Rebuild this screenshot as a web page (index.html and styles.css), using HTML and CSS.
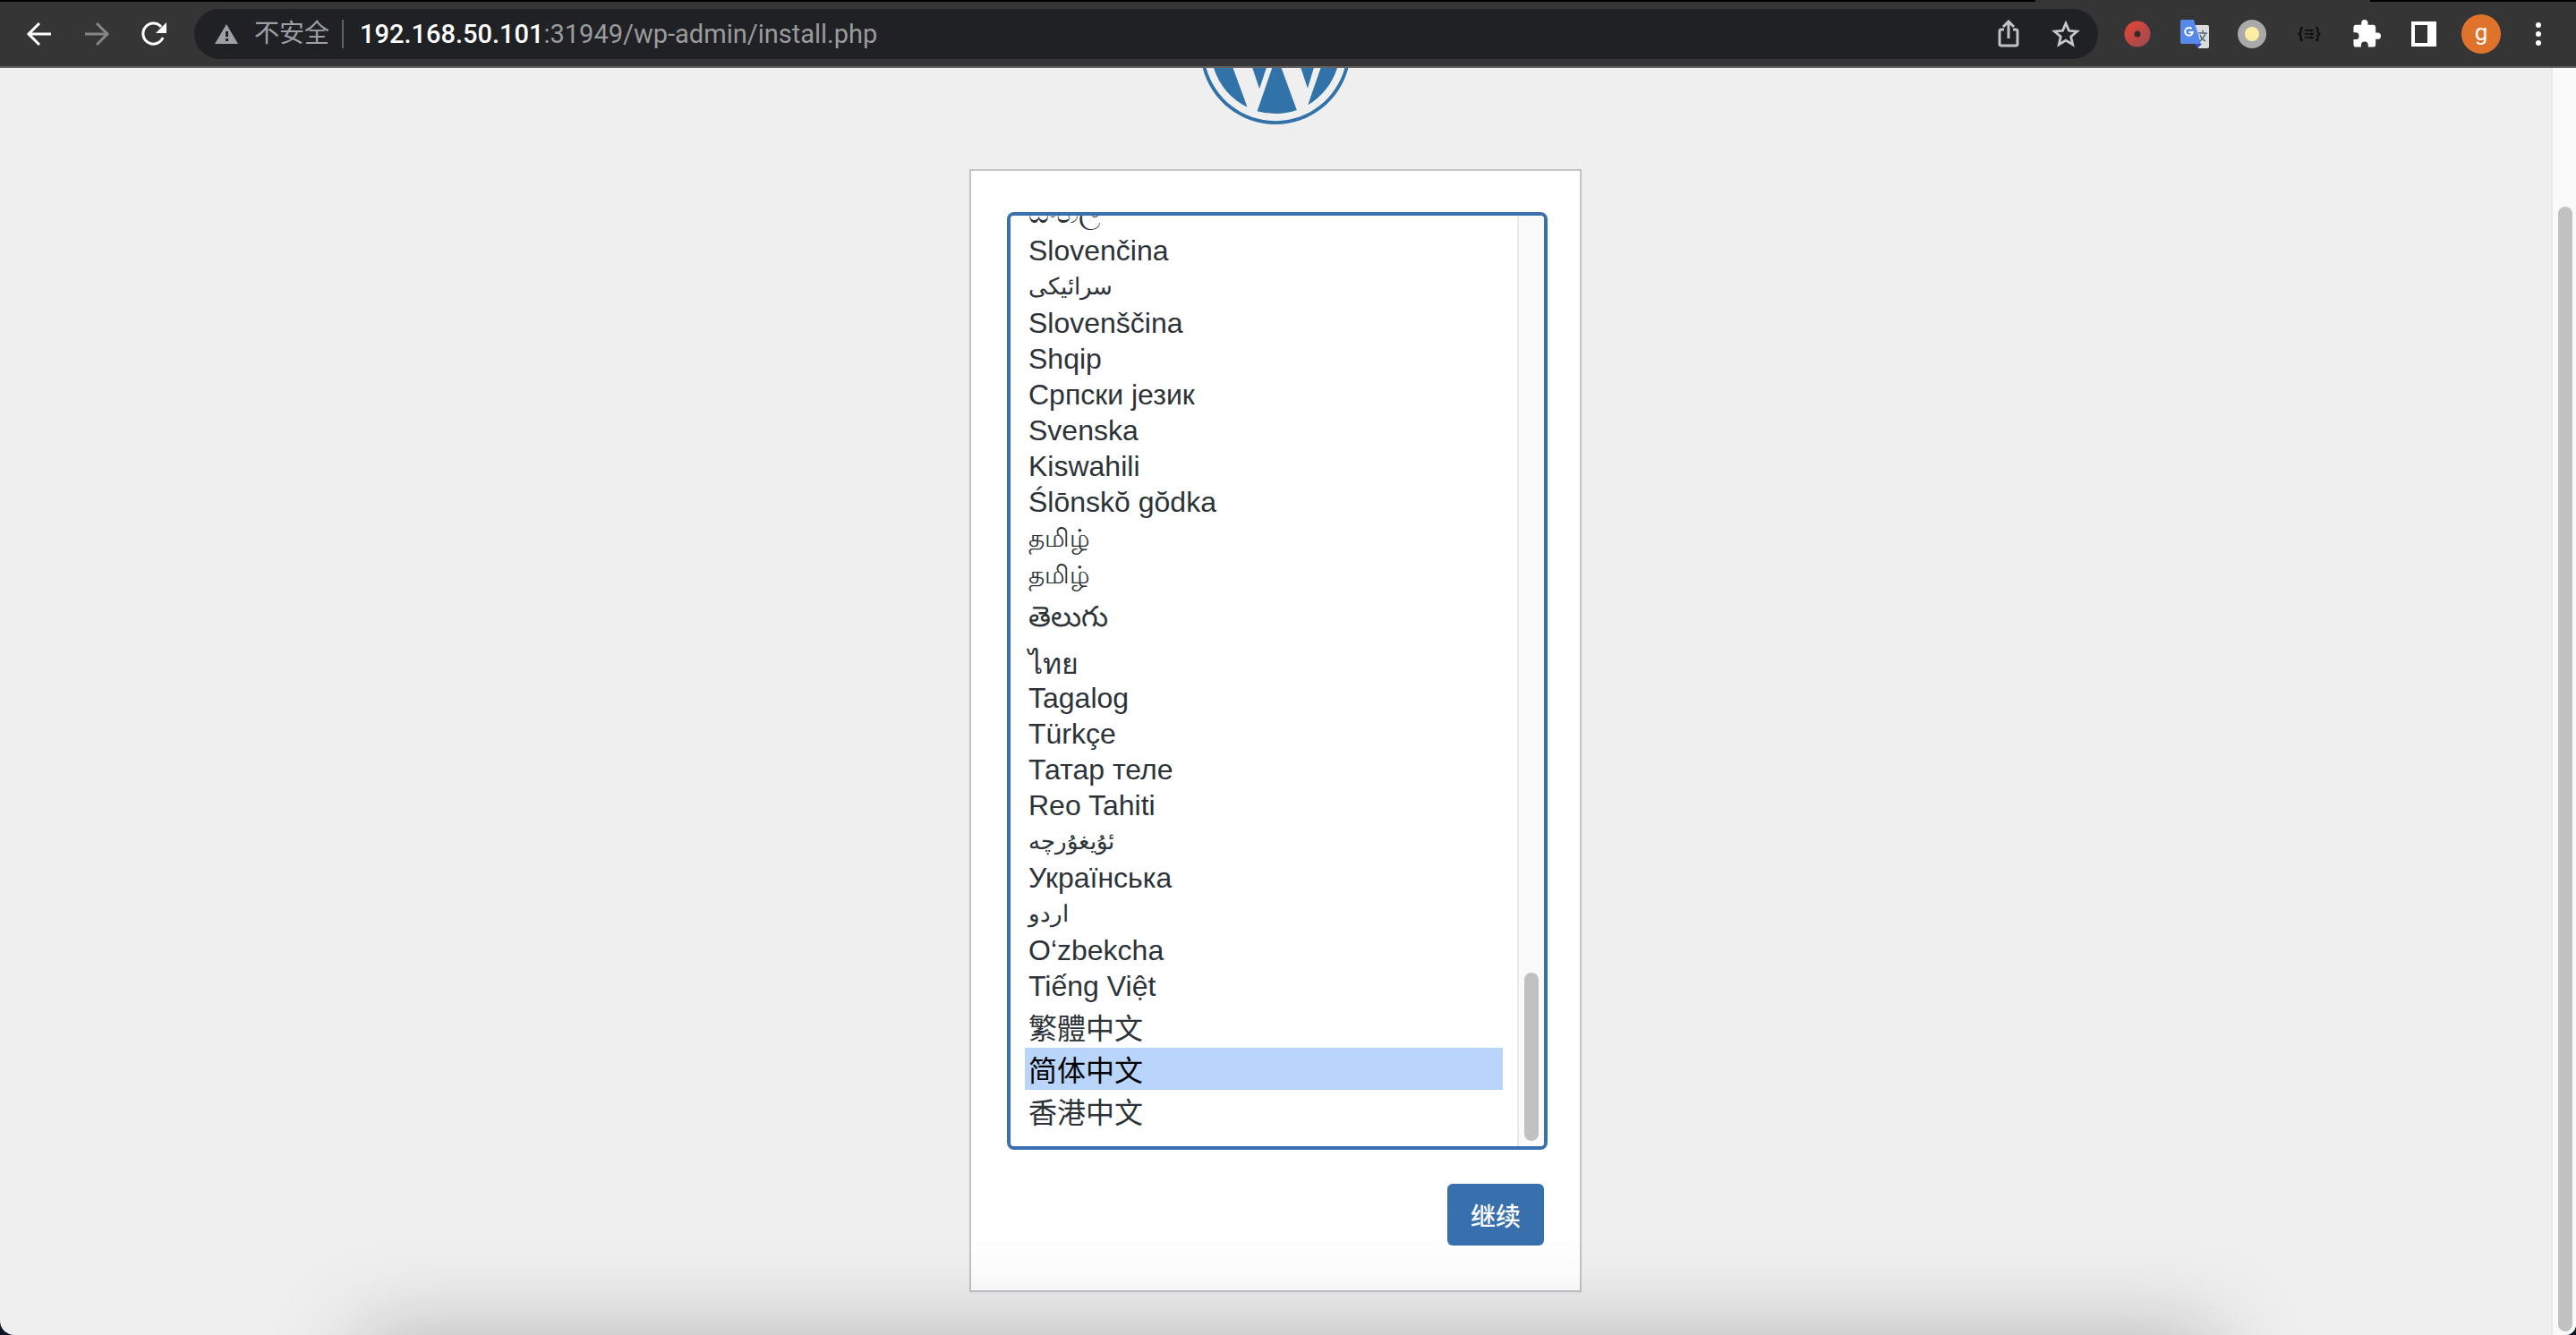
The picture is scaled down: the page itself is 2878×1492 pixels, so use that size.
FILE: index.html
```html
<!DOCTYPE html>
<html lang="zh-CN">
<head>
<meta charset="utf-8">
<title>WordPress › 安装</title>
<link rel="stylesheet" href="styles.css">
</head>
<body>
<div class="window">
  <header class="toolbar">
    <nav class="nav-buttons">
      <button class="tool" type="button" aria-label="后退"><svg width="30" height="30" viewBox="0 0 30 30"><path d="M28 15H4M15 3L3 15l12 12" fill="none" stroke="#fff" stroke-width="3"/></svg></button>
      <button class="tool" type="button" aria-label="前进"><svg width="30" height="30" viewBox="0 0 30 30"><path d="M2 15h24M15 3l12 12-12 12" fill="none" stroke="#858585" stroke-width="3"/></svg></button>
      <button class="tool" type="button" aria-label="重新加载"><svg width="30" height="30" viewBox="0 0 30 30"><path d="M25 19a11.500 11.500 0 1 1-2-12" fill="none" stroke="#fff" stroke-width="3"/><path d="M29 2v12H17z" fill="#fff"/></svg></button>
    </nav>
    <div class="omnibox">
      <svg width="26" height="24" viewBox="0 0 26 24"><path d="M13 1l13 22H0z" fill="#9aa0a6"/><path d="M12 9h3v6h-3zM12 17h3v3h-3z" fill="#202124"/></svg>
      <span class="security">不安全</span>
      <span class="divider"></span>
      <span class="url"><b>192.168.50.101</b>:31949/wp-admin/install.php</span>
      <button class="tool" type="button" aria-label="分享"><svg width="24" height="32" viewBox="0 0 24 32"><path d="M7 11H4a2 2 0 0 0-2 2v14a2 2 0 0 0 2 2h16a2 2 0 0 0 2-2V13a2 2 0 0 0-2-2h-3M12 21V3M6 8l6-6 6 6" fill="none" stroke="#c0c1c3" stroke-width="3"/></svg></button>
      <button class="tool" type="button" aria-label="收藏"><svg width="32" height="32" viewBox="0 0 32 32"><path d="M16 4l3.500 8.300 9 .8-6.800 5.900 2 8.800L16 23.100l-7.700 4.700 2-8.800-6.800-5.900 9-.8z" fill="none" stroke="#c6c7c9" stroke-width="2.800"/></svg></button>
    </div>
    <div class="extensions">
      <button class="tool" type="button" aria-label="录制"><svg width="30" height="30" viewBox="0 0 30 30"><defs><linearGradient id="rec" x1="0" y1="0" x2="1" y2="1"><stop offset="0.200" stop-color="#d9453a"/><stop offset="1" stop-color="#984a52"/></linearGradient></defs><circle cx="15" cy="15" r="14.500" fill="url(#rec)"/><circle cx="15" cy="15" r="3.500" fill="#35272a"/></svg></button>
      <button class="tool" type="button" aria-label="翻译"><svg width="32" height="32" viewBox="0 0 32 32"><path d="M14 6h16a2 2 0 0 1 2 2v22a2 2 0 0 1-2 2H20z" fill="#dcdcdc"/><path d="M16 27h8l-5 5z" fill="#3450b4"/><path d="M2 0h13l8 27H2a2 2 0 0 1-2-2V2a2 2 0 0 1 2-2z" fill="#5689ea"/><path d="M20 15h10M25 12v3M28 15c-1 4-4 7-6 9M22 17c1 3 4 6 6 7" fill="none" stroke="#56707c" stroke-width="1.600"/><path d="M12.500 10.200a4.300 4.300 0 1 0 1.300 3.800H9.500" fill="none" stroke="#fff" stroke-width="2"/></svg></button>
      <button class="tool" type="button" aria-label="主题"><svg width="32" height="32" viewBox="0 0 32 32"><circle cx="16" cy="16" r="16" fill="#a9a9a9"/><circle cx="16" cy="16" r="8" fill="#fdeea3"/></svg></button>
      <button class="tool" type="button" aria-label="JSON"><svg width="28" height="18" viewBox="0 0 28 18"><path d="M7 2H6Q4.500 2 4.500 4v3L2.500 9l2 2v3q0 2 1.500 2h1M21 2h1q1.500 0 1.500 2v3l2 2-2 2v3q0 2-1.500 2h-1" fill="none" stroke="#0c0c0c" stroke-width="2"/><path d="M9 5h10M9 9h10M9 13h10M16 3.500v3M17 7.500v3M16 11.500v3" fill="none" stroke="#0c0c0c" stroke-width="1.400"/></svg></button>
      <button class="tool" type="button" aria-label="扩展程序"><svg width="32" height="32" viewBox="1 1 22 22"><path d="M20.500 11H19V7a2 2 0 0 0-2-2h-4V3.500a2.500 2.500 0 0 0-5 0V5H4a2 2 0 0 0-2 2v3.800h1.500a2.700 2.700 0 0 1 0 5.400H2V20a2 2 0 0 0 2 2h3.800v-1.500a2.700 2.700 0 0 1 5.400 0V22H17a2 2 0 0 0 2-2v-4h1.500a2.500 2.500 0 0 0 0-5z" fill="#fff"/></svg></button>
      <button class="tool" type="button" aria-label="侧边栏"><svg width="28" height="28" viewBox="0 0 28 28"><path d="M0 0h28v28H0zM4 4v20h14V4z" fill="#fff" fill-rule="evenodd"/></svg></button>
      <button class="tool" type="button" aria-label="用户"><span class="avatar">g</span></button>
      <button class="tool" type="button" aria-label="菜单"><svg width="6" height="26" viewBox="0 0 6 26"><circle cx="3" cy="3" r="3" fill="#fff"/><circle cx="3" cy="13" r="3" fill="#fff"/><circle cx="3" cy="23" r="3" fill="#fff"/></svg></button>
    </div>
  </header>
  <div class="viewport">
    <main class="page" id="page">
      <a class="logo" href="#" aria-label="WordPress"><svg width="168" height="168" viewBox="0 0 122.520 122.523" fill="#3173a9"><path d="M8.708 61.260c0 20.802 12.089 38.779 29.619 47.298L13.258 39.872a52.354 52.354 0 0 0-4.550 21.388zM96.740 58.608c0-6.495-2.333-10.993-4.334-14.494-2.664-4.329-5.161-7.995-5.161-12.324 0-4.831 3.664-9.328 8.825-9.328.233 0 .454.029.681.042-9.350-8.566-21.807-13.796-35.489-13.796-18.360 0-34.513 9.420-43.910 23.688 1.233.037 2.395.063 3.382.063 5.497 0 14.006-.667 14.006-.667 2.833-.167 3.167 3.994.337 4.329 0 0-2.847.335-6.015.501L48.200 93.547l11.501-34.493-8.188-22.434c-2.830-.166-5.511-.501-5.511-.501-2.832-.166-2.500-4.496.332-4.329 0 0 8.679.667 13.843.667 5.496 0 14.006-.667 14.006-.667 2.835-.167 3.168 3.994.337 4.329 0 0-2.853.335-6.015.501l18.992 56.494 5.242-17.517c2.272-7.269 4.001-12.490 4.001-16.989z"/><path d="M62.184 65.857l-15.768 45.819a52.552 52.552 0 0 0 14.846 2.141c6.120 0 11.989-1.058 17.452-2.979a4.451 4.451 0 0 1-.374-.724zM107.376 36.046c.226 1.674.354 3.471.354 5.404 0 5.333-.996 11.328-3.996 18.824l-16.053 46.413c15.624-9.111 26.133-26.038 26.133-45.426.001-9.137-2.333-17.729-6.438-25.215z"/><path d="M61.262 0C27.483 0 0 27.481 0 61.260c0 33.783 27.483 61.263 61.262 61.263 33.778 0 61.265-27.480 61.265-61.263C122.526 27.481 95.040 0 61.262 0zm0 119.715c-32.230 0-58.453-26.223-58.453-58.455 0-32.230 26.222-58.451 58.453-58.451 32.229 0 58.450 26.221 58.450 58.451 0 32.232-26.221 58.455-58.450 58.455z"/></svg></a>
      <form class="card">
        <div class="list-box">
          <select class="languages" id="language" name="language" size="24" aria-label="选择语言">
            <option>English (United States)</option><option>Afrikaans</option><option>Aragonés</option><option>Asturianu</option><option>Azərbaycan dili</option><option>Boarisch</option><option>Bosanski</option><option>Brezhoneg</option><option>Català</option><option>Cebuano</option><option>Corsu</option><option>Čeština</option><option>Cymraeg</option><option>Dansk</option><option>Davvisámegiella</option><option>Deutsch (Schweiz)</option><option>Deutsch</option><option>Deutsch (Sie)</option><option>Deutsch (Österreich)</option><option>Dolnoserbšćina</option><option>Eesti</option><option>English (Australia)</option><option>English (Canada)</option><option>English (New Zealand)</option><option>English (South Africa)</option><option>English (UK)</option><option>Español</option><option>Esperanto</option><option>Euskara</option><option>Français</option><option>Français de Belgique</option><option>Français du Canada</option><option>Friulian</option><option>Frysk</option><option>Gàidhlig</option><option>Galego</option><option>Hornjoserbšćina</option><option>Hrvatski</option><option>Bahasa Indonesia</option><option>Íslenska</option><option>Italiano</option><option>Basa Jawa</option><option>Taqbaylit</option><option>Latviešu valoda</option><option>Lietuvių kalba</option><option>Magyar</option><option>Bahasa Melayu</option><option>Nederlands</option><option>Norsk bokmål</option><option>Norsk nynorsk</option><option>Occitan</option><option>Polski</option><option>Português</option><option>Português do Brasil</option><option>Română</option><option>Русский</option>
            <option class="tall">සිංහල</option>
            <option>Slovenčina</option>
            <option class="arabic">سرائیکی</option>
            <option>Slovenščina</option>
            <option>Shqip</option>
            <option>Српски језик</option>
            <option>Svenska</option>
            <option>Kiswahili</option>
            <option>Ślōnskŏ gŏdka</option>
            <option class="tamil">தமிழ்</option>
            <option class="tamil">தமிழ்</option>
            <option class="tall">తెలుగు</option>
            <option class="thai">ไทย</option>
            <option>Tagalog</option>
            <option>Türkçe</option>
            <option>Татар теле</option>
            <option>Reo Tahiti</option>
            <option class="arabic">ئۇيغۇرچە</option>
            <option>Українська</option>
            <option class="arabic">اردو</option>
            <option>O‘zbekcha</option>
            <option>Tiếng Việt</option>
            <option class="cjk" lang="zh-TW">繁體中文</option>
            <option class="cjk" lang="zh-CN" selected>简体中文</option>
            <option class="cjk" lang="zh-HK">香港中文</option>
          </select>
          <div class="track list-track"><div class="thumb"></div></div>
        </div>
        <p class="step"><button class="continue" type="submit">继续</button></p>
      </form>
    </main>
    <div class="track page-track"><div class="thumb"></div></div>
  </div>
  <div class="dock-shadow"></div>
</div>
<script src="script.js"></script>
</body>
</html>
```
FILE: styles.css
```css
* {
  box-sizing: border-box;
}

html,
body {
  height: 100%;
  margin: 0;
}

body {
  background: #0d1626;
  font-family: Roboto, "Noto Sans CJK SC", sans-serif;
}

button {
  margin: 0;
  padding: 0;
  border: 0;
  background: none;
  font: inherit;
}

.window {
  position: relative;
  display: flex;
  flex-direction: column;
  height: 100%;
  overflow: hidden;
  border-radius: 0 0 12px 16px;
  background: #efefef;
}

.toolbar {
  display: flex;
  flex: none;
  align-items: center;
  height: 76px;
  padding: 2px 10px 0 12px;
  border-bottom: 2px solid #646262;
  background: linear-gradient(90deg, #000 79%, #353535 79% 92%, #000 92%) top / 100% 2px no-repeat #353535;
}

.nav-buttons,
.extensions {
  display: flex;
}

.tool {
  display: flex;
  flex: none;
  align-items: center;
  justify-content: center;
  width: 64px;
  height: 56px;
}

.omnibox {
  display: flex;
  flex: 1;
  align-items: center;
  height: 56px;
  margin: 0 12px 0 13px;
  padding: 0 4px 0 23px;
  border-radius: 28px;
  background: #202124;
  color: #9aa0a6;
  font-size: 28px;
  line-height: 36px;
}

.security {
  margin-left: 18px;
}

.divider {
  width: 2px;
  height: 32px;
  margin: 0 18px 0 14px;
  background: #5f6368;
}

.url {
  flex: 1;
  color: #9a9b9d;
  font-size: 29px;
}

.url b {
  color: #fff;
  font-weight: 500;
}

.avatar {
  width: 44px;
  height: 44px;
  border-radius: 50%;
  background: #df732b;
  color: #fff;
  font-size: 26px;
  line-height: 40px;
  text-align: center;
}

.viewport {
  display: flex;
  flex: 1;
  min-height: 0;
}

.page {
  display: flex;
  flex: 1;
  flex-direction: column;
  align-items: center;
  padding: 66px 0 48px;
  overflow-y: auto;
  scrollbar-width: none;
}

.track {
  display: flex;
  flex: none;
  flex-direction: column;
  justify-content: flex-end;
  border-left: 2px solid #e8e8e8;
  background: #fafafa;
}

.thumb {
  border-radius: 8px;
  background: #c1c1c1;
}

.page-track {
  width: 28px;
  padding: 4px 4px 4px 6px;
}

.page-track .thumb {
  height: 89.3%;
}

.list-track {
  width: 30px;
  padding: 6px;
}

.list-track .thumb {
  height: 18.3%;
}

.logo {
  flex: none;
  height: 168px;
  margin-bottom: 50px;
}

.card {
  flex: none;
  width: 684px;
  padding: 46px 36px 50px 40px;
  border: 2px solid #c3c4c7;
  background: #fff;
  box-shadow: 0 2px 2px rgba(0, 0, 0, 0.04);
}

.list-box {
  display: flex;
  height: 1048px;
  overflow: hidden;
  border: 4px solid #3870b0;
  border-radius: 8px;
}

.languages {
  flex: 1;
  min-width: 0;
  height: 100%;
  margin: 0;
  padding: 16px;
  border: 0;
  border-radius: 0;
  outline: 0;
  background: #fff;
  color: #2c3338;
  font: 32px/36px "Liberation Sans", "Noto Sans CJK SC", sans-serif;
  scrollbar-width: none;
}

.languages option {
  height: 40px;
  min-height: 0;
  padding: 0 4px;
  line-height: 36px;
}

.languages .arabic {
  height: 41px;
  padding-top: 3px;
  font-size: 26px;
}

.languages .tamil {
  height: 41px;
  padding-top: 3px;
  font-size: 28px;
}

.languages .tall {
  height: 48px;
  padding-top: 6px;
}

.languages .thai {
  height: 49px;
  padding-top: 3px;
}

.languages .cjk {
  height: 47px;
  line-height: 34px;
}

.languages option:checked {
  background: linear-gradient(#b9d5fb, #b9d5fb);
  color: #000;
}

.step {
  display: flex;
  justify-content: flex-end;
  margin: 38px 4px 0 0;
}

.continue {
  height: 69px;
  padding: 0 26px;
  border-radius: 6px;
  background: #3870ad;
  color: #fff;
  font: 500 28px/36px "Noto Sans CJK SC", sans-serif;
}

.dock-shadow {
  position: absolute;
  top: 100%;
  right: 14%;
  left: 14%;
  height: 120px;
  box-shadow: 0 0 100px rgba(0, 0, 0, 0.25);
}
```
FILE: script.js
```js
// Open with both the page and the language list scrolled to the end.
for (const id of ["page", "language"]) {
  const box = document.getElementById(id);
  box.scrollTop = box.scrollHeight;
}
```
